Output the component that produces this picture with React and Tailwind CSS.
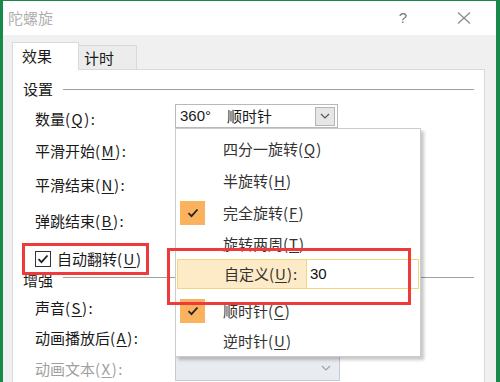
import React from "react";

const Check = ({ className = "" }) => (
  <svg width="12" height="10" viewBox="0 0 12 10" className={className}>
    <path d="M1.5 5.2 L4.5 8.2 L10.5 1.5" fill="none" stroke="#222" strokeWidth="1.8" />
  </svg>
);

const Chevron = ({ color = "#555" }) => (
  <svg width="10" height="6" viewBox="0 0 10 6">
    <path d="M1 1 L5 5 L9 1" fill="none" stroke={color} strokeWidth="1.2" />
  </svg>
);

function Label({ text, k, gray }) {
  return (
    <span className={`text-[15px] leading-[20px] whitespace-nowrap ${gray ? "text-[#a0a0a0]" : "text-[#1a1a1a]"}`}>
      {text}
      <span className="tracking-[1.5px]">
        (<span className="underline underline-offset-2">{k}</span>):
      </span>
    </span>
  );
}

function MenuItem({ text, k, checked, h }) {
  return (
    <div className={`flex items-center ${h}`}>
      <div className={`ml-[4px] w-[25px] h-[24px] flex items-center justify-center ${checked ? "bg-[#fbb25e]" : ""}`}>
        {checked && <Check />}
      </div>
      <span className="ml-[18px] text-[15px] leading-[20px] text-[#333] whitespace-nowrap">
        {text}
        <span className="tracking-[1px]">
          (<span className="underline underline-offset-2">{k}</span>)
        </span>
      </span>
    </div>
  );
}

export default function App() {
  return (
    <div className="relative w-[500px] h-[382px] overflow-hidden bg-[#18894a] pt-px pl-[3px] pr-[4px] font-['Noto_Sans_CJK_SC',sans-serif]">
      <div className="h-[400px] bg-[#f0f0f0] flex flex-col">
        {/* title bar */}
        <div className="h-[34px] shrink-0 bg-white flex items-center pl-[5px]">
          <span className="text-[15px] leading-[20px] text-[#b0b0b0]">陀螺旋</span>
          <span className="ml-auto text-[15px] leading-[20px] text-[#7a7a7a] font-['Liberation_Sans',sans-serif]">?</span>
          <svg width="14" height="12" viewBox="0 0 14 12" className="ml-[50px] mr-[25px]">
            <path d="M1 0.5 L13 11.5 M13 0.5 L1 11.5" stroke="#8a8a8a" strokeWidth="1.2" />
          </svg>
        </div>

        {/* body */}
        <div className="flex-1 flex flex-col pl-[9px] pr-[11px] pt-[7px]">
          {/* tabs */}
          <div className="relative z-10 flex items-end h-[28px]">
            <div className="w-[67px] h-[28px] bg-white border border-b-0 border-[#d9d9d9] flex items-center pl-[9px] pb-[2px]">
              <span className="text-[15px] leading-[20px] text-[#1a1a1a]">效果</span>
            </div>
            <div className="w-[58px] h-[25px] bg-[#ececec] border border-l-0 border-[#d9d9d9] flex items-center pl-[5px]">
              <span className="text-[15px] leading-[20px] text-[#1a1a1a]">计时</span>
            </div>
          </div>

          {/* panel */}
          <div className="-mt-px flex-1 bg-white border border-[#d9d9d9] pl-[10px] pr-[10px] pt-[9px] flex flex-col">
            {/* 设置 header */}
            <div className="h-[20px] flex items-center">
              <span className="text-[15px] leading-[20px] text-[#1a1a1a]">设置</span>
              <div className="flex-1 h-px bg-[#a0a0a0] ml-[10px]" />
            </div>

            <div className="pl-[12px] flex flex-col">
              <div className="mt-[5px] h-[24px] flex items-center">
                <div className="w-[140px] pt-[3px]"><Label text="数量" k="Q" /></div>
                <div className="w-[163px] h-[24px] border border-[#b9b9b9] bg-white flex items-center pl-[4px] pr-[2px]">
                  <span className="text-[15px] leading-[20px] text-[#1a1a1a] font-['Liberation_Sans',sans-serif]">360°</span>
                  <span className="ml-[16px] text-[15px] leading-[20px] text-[#1a1a1a]">顺时针</span>
                  <div className="ml-auto w-[20px] h-[19px] bg-[#e6e6e6] border border-[#b5b5b5] flex items-center justify-center">
                    <Chevron />
                  </div>
                </div>
              </div>
              <div className="mt-[11px] h-[24px] flex items-center"><Label text="平滑开始" k="M" /></div>
              <div className="mt-[10px] h-[24px] flex items-center"><Label text="平滑结束" k="N" /></div>
              <div className="mt-[12px] h-[24px] flex items-center"><Label text="弹跳结束" k="B" /></div>
              <div className="mt-[15px] h-[22px] flex items-center">
                <div className="w-[16px] h-[16px] border border-[#333] flex items-center justify-center">
                  <Check />
                </div>
                <span className="ml-[6px] text-[15px] leading-[20px] text-[#1a1a1a] whitespace-nowrap">
                  自动翻转
                  <span className="tracking-[1.5px]">
                    (<span className="underline underline-offset-2">U</span>)
                  </span>
                </span>
              </div>
            </div>

            {/* 增强 header */}
            <div className="h-[20px] flex items-center">
              <span className="text-[15px] leading-[20px] text-[#1a1a1a]">增强</span>
              <div className="flex-1 h-px bg-[#a0a0a0] ml-[10px] -mt-[5px]" />
            </div>

            <div className="pl-[12px] flex flex-col">
              <div className="mt-[6px] h-[24px] flex items-center"><Label text="声音" k="S" /></div>
              <div className="mt-[6px] h-[24px] flex items-center"><Label text="动画播放后" k="A" /></div>
              <div className="mt-[5px] h-[26px] flex items-center">
                <div className="w-[140px]"><Label text="动画文本" k="X" gray /></div>
                <div className="w-[165px] h-[26px] border border-[#c3cad4] bg-[#e8ebef] flex items-center justify-end pr-[3px]">
                  <div className="w-[20px] h-[20px] flex items-center justify-center">
                    <Chevron color="#9aa3ad" />
                  </div>
                </div>
              </div>
            </div>
          </div>
        </div>
      </div>

      {/* dropdown menu */}
      <div className="absolute left-[175px] top-[128px] w-[246px] h-[229px] bg-white border border-[#cccccc] shadow-[3px_3px_3px_rgba(0,0,0,0.22)] pt-[4px] flex flex-col">
        <MenuItem text="四分一旋转" k="Q" h="h-[32px]" />
        <MenuItem text="半旋转" k="H" h="h-[32px]" />
        <MenuItem text="完全旋转" k="F" checked h="h-[32px]" />
        <MenuItem text="旋转两周" k="T" h="h-[30px]" />
        <div className="ml-px mr-px h-[30px] bg-[#fdeac6] border border-[#f3d77c] flex items-center">
          <span className="ml-[46px] text-[15px] leading-[20px] text-[#333] whitespace-nowrap">
            自定义
            <span className="tracking-[1px]">
              (<span className="underline underline-offset-2">U</span>):
            </span>
          </span>
          <div className="ml-auto w-[112px] h-full bg-white border-l border-[#f3d77c] flex items-center pl-[3px]">
            <span className="text-[15px] leading-[20px] text-[#111] font-['Liberation_Sans',sans-serif]">30</span>
          </div>
        </div>
        <div className="mt-[6px]">
          <MenuItem text="顺时针" k="C" checked h="h-[32px]" />
        </div>
        <MenuItem text="逆时针" k="U" h="h-[28px]" />
      </div>

      {/* red annotation boxes */}
      <div className="absolute left-[22px] top-[243px] w-[127px] h-[32px] border-[3px] border-[#ee3a3a]" />
      <div className="absolute left-[167px] top-[248px] w-[244px] h-[57px] border-[3px] border-[#ee3a3a]" />
    </div>
  );
}
